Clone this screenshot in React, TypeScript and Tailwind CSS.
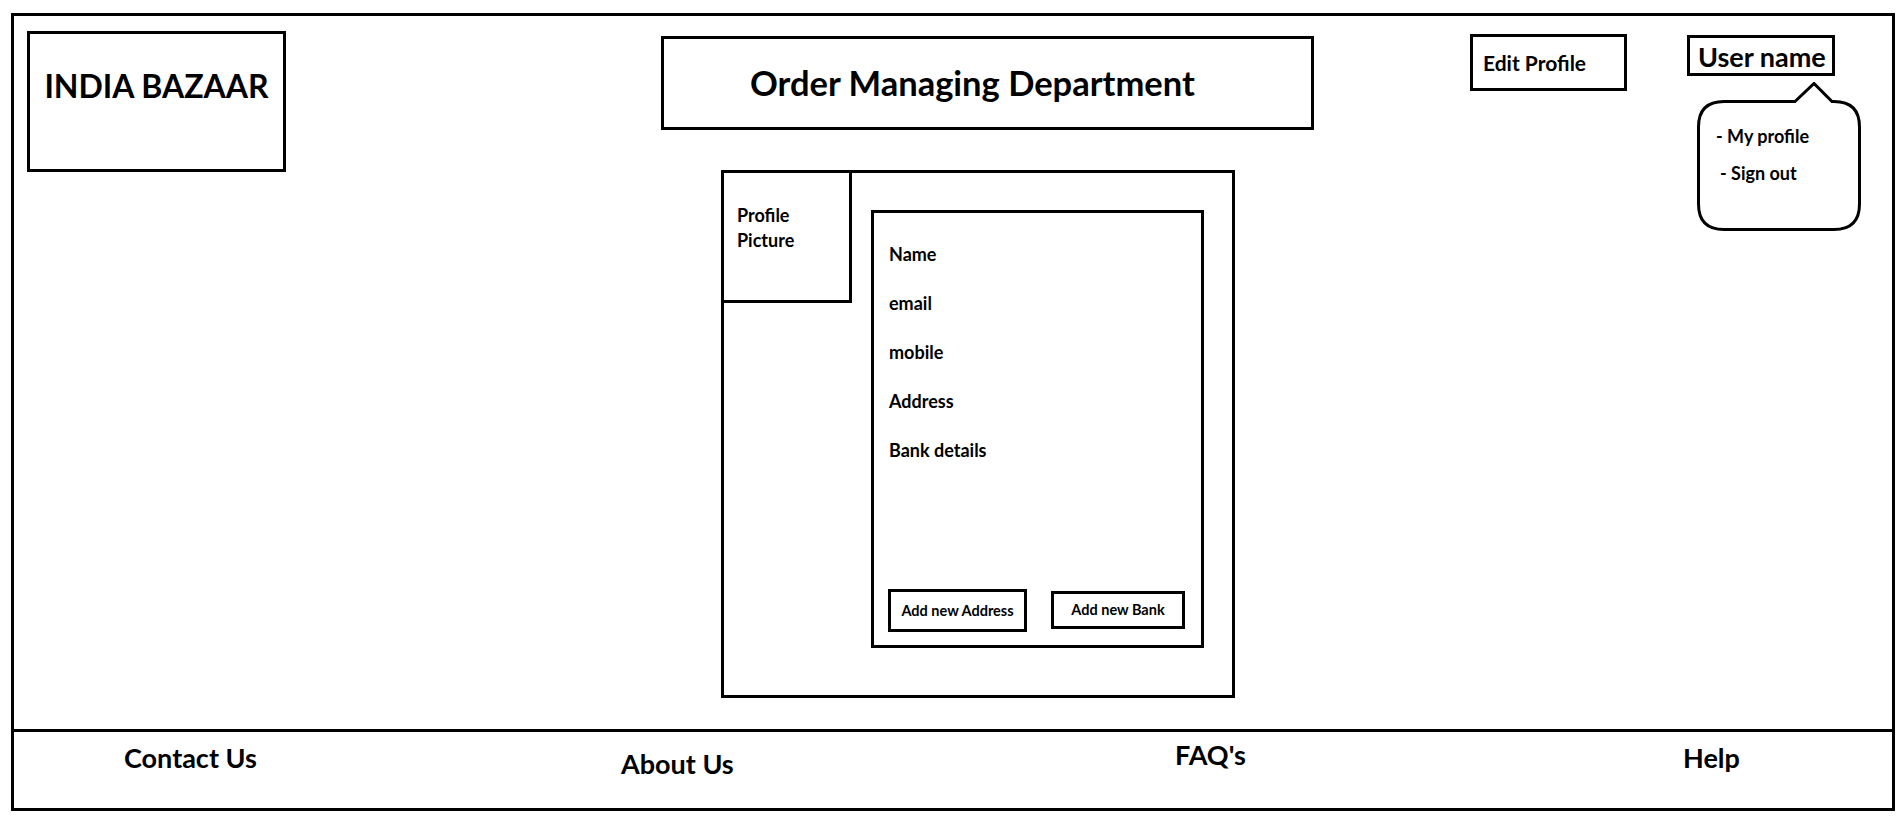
import type { ReactNode } from 'react'

function Bubble() {
	return (
		<div className="absolute left-[10px] top-[47px] w-[164px] h-[150px]">
			<svg className="absolute inset-0" width="164" height="150" viewBox="0 0 164 150" fill="none">
				<path
					d="M98 19.5 L117 1.5 L135 19.5 L137 19.5 Q162.5 19.5 162.5 45 L162.5 122 Q162.5 147.5 137 147.5 L27 147.5 Q1.5 147.5 1.5 122 L1.5 45 Q1.5 19.5 27 19.5 Z"
					stroke="#000"
					strokeWidth="3"
					fill="#fff"
				/>
			</svg>
			<div className="relative flex flex-col pt-[43px] text-[18px] leading-[22px] font-bold">
				<span className="ml-[19px]">- My profile</span>
				<span className="ml-[23px] mt-[15px]">- Sign out</span>
			</div>
		</div>
	)
}

function FooterCell({ width, top, children }: { width: string; top: string; children: ReactNode }) {
	return (
		<div className={`${width} ${top} shrink-0`}>
			<span className="text-[27px] leading-[30px] font-bold">{children}</span>
		</div>
	)
}

function App() {
	const campos = ['Name', 'email', 'mobile', 'Address', 'Bank details']

	return (
		<div className="min-h-screen bg-white text-black font-['Lato',sans-serif] pl-[11px] pt-[13px]">
			<div className="w-[1884px] h-[798px] border-[3px] border-black flex flex-col">
				{/* topo */}
				<div className="flex-1 flex flex-col">
					<div className="flex items-start h-[154px]">
						<div className="ml-[13px] mt-[15px] w-[259px] h-[141px] border-[3px] border-black flex justify-center pt-[32px]">
							<span className="text-[32px] leading-[40px] font-bold">INDIA BAZAAR</span>
						</div>

						<div className="ml-[375px] mt-[20px] w-[653px] h-[94px] border-[3px] border-black flex items-center pl-[86px]">
							<span className="text-[34.5px] leading-[40px] font-bold">Order Managing Department</span>
						</div>

						<div className="ml-[156px] mt-[18px] w-[157px] h-[57px] border-[3px] border-black flex items-center pl-[10px]">
							<span className="text-[21px] leading-[26px] font-bold">Edit Profile</span>
						</div>

						<div className="relative ml-[60px] mt-[19px]">
							<div className="w-[148px] h-[41px] border-[3px] border-black flex items-center pl-[8px] pt-[3px]">
								<span className="text-[27px] leading-[30px] font-bold whitespace-nowrap">User name</span>
							</div>
							<Bubble />
						</div>
					</div>

					{/* perfil */}
					<div className="ml-[707px] w-[514px] h-[528px] border-[3px] border-black flex items-start">
						<div className="-ml-[3px] -mt-[3px] w-[131px] h-[133px] border-[3px] border-black pl-[13px] pt-[30px]">
							<div className="text-[18px] leading-[25px] font-bold">
								<div>Profile</div>
								<div>Picture</div>
							</div>
						</div>

						<div className="ml-[19px] mt-[37px] w-[333px] h-[438px] border-[3px] border-black flex flex-col pl-[15px] pt-[30px] pb-[13px]">
							<div className="flex flex-col gap-[27px]">
								{campos.map((campo) => (
									<span key={campo} className="text-[18px] leading-[22px] font-bold">
										{campo}
									</span>
								))}
							</div>

							<div className="mt-auto flex items-start -ml-[1px]">
								<button className="w-[139px] h-[43px] border-[3px] border-black flex items-center justify-center text-[14.5px] font-bold">
									Add new Address
								</button>
								<button className="ml-[24px] mt-[2px] w-[134px] h-[38px] border-[3px] border-black flex items-center justify-center text-[14.5px] font-bold">
									Add new Bank
								</button>
							</div>
						</div>
					</div>
				</div>

				{/* rodape */}
				<div className="h-[79px] border-t-[3px] border-black flex items-start pl-[110px]">
					<FooterCell width="w-[497px]" top="pt-[11px]">Contact Us</FooterCell>
					<FooterCell width="w-[554px]" top="pt-[17px]">About Us</FooterCell>
					<FooterCell width="w-[508px]" top="pt-[8px]">FAQ's</FooterCell>
					<FooterCell width="w-[100px]" top="pt-[11px]">Help</FooterCell>
				</div>
			</div>
		</div>
	)
}

export default App
